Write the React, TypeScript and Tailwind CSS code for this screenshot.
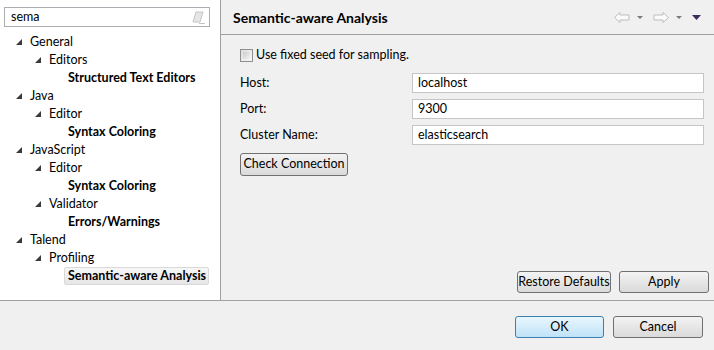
import React from 'react';

const font = { fontFamily: '"Segoe UI", Lato, "Noto Sans", sans-serif' };

type Node = { label: string; depth: number; leaf?: boolean; selected?: boolean };

const tree: Node[] = [
  { label: 'General', depth: 0 },
  { label: 'Editors', depth: 1 },
  { label: 'Structured Text Editors', depth: 2, leaf: true },
  { label: 'Java', depth: 0 },
  { label: 'Editor', depth: 1 },
  { label: 'Syntax Coloring', depth: 2, leaf: true },
  { label: 'JavaScript', depth: 0 },
  { label: 'Editor', depth: 1 },
  { label: 'Syntax Coloring', depth: 2, leaf: true },
  { label: 'Validator', depth: 1 },
  { label: 'Errors/Warnings', depth: 2, leaf: true },
  { label: 'Talend', depth: 0 },
  { label: 'Profiling', depth: 1 },
  { label: 'Semantic-aware Analysis', depth: 2, leaf: true, selected: true },
];

const Expanded = () => (
  <svg width="6" height="6" viewBox="0 0 6 6" className="shrink-0">
    <polygon points="6,0 6,6 0,6" fill="#3a3a3a" />
  </svg>
);

const Btn = ({ label, w, primary }: { label: string; w: string; primary?: boolean }) => (
  <button
    className={`${w} h-[22px] rounded-[3px] border text-[12.5px] text-black ${
      primary
        ? 'border-[#3c7fb1] bg-gradient-to-b from-[#eaf6fd] to-[#bfe2f8]'
        : 'border-[#707070] bg-gradient-to-b from-[#f3f3f3] to-[#dadada]'
    }`}
  >
    {label}
  </button>
);

const Field = ({ label, value }: { label: string; value: string }) => (
  <div className="flex items-center h-[20px]">
    <span className="w-[172px] text-[12.5px]">{label}</span>
    <div className="flex-1 h-[20px] bg-white border border-[#c5c5c5] flex items-center px-[5px] text-[12.5px]">
      {value}
    </div>
  </div>
);

export default function App() {
  return (
    <div className="w-[714px] h-[350px] bg-[#f0f0f0] text-black flex flex-col overflow-hidden" style={font}>
      <div className="flex h-[300px]">
        {/* left tree */}
        <div className="w-[221px] bg-white border-r border-[#a0a0a0] flex flex-col">
          <div className="mt-[7px] ml-[4px] w-[206px] h-[20px] border border-[#abadb3] flex items-center pl-[6px] pr-[4px] text-[12.5px]">
            <span className="flex-1">sema</span>
            <svg width="13" height="13" viewBox="0 0 13 13">
              <polygon points="4,1 11,1 8,11 1,11" fill="#e6e6e6" stroke="#c4c4c4" strokeWidth="1" />
              <line x1="7" y1="12.5" x2="13" y2="12.5" stroke="#c4c4c4" />
            </svg>
          </div>
          <div className="mt-[6px] flex flex-col">
            {tree.map((n, i) => (
              <div key={i} className="h-[18px] flex items-center text-[12.5px]">
                {n.leaf ? (
                  <div
                    style={{ marginLeft: 64 }}
                    className={`h-[18px] flex items-center px-[4px] font-bold ${
                      n.selected ? 'rounded-[2px] border border-[#d9d9d9] bg-gradient-to-b from-[#f7f7f7] to-[#e6e6e6] pl-[3px] pr-[2px]' : ''
                    }`}
                  >
                    {n.label}
                  </div>
                ) : (
                  <div className="flex items-center" style={{ marginLeft: 16 + n.depth * 19 }}>
                    <Expanded />
                    <span className="ml-[8px]">{n.label}</span>
                  </div>
                )}
              </div>
            ))}
          </div>
        </div>

        {/* right page */}
        <div className="flex-1 flex flex-col">
          <div className="h-[35px] border-b border-[#a0a0a0] flex items-center pl-[12px] pr-[13px]">
            <span className="flex-1 text-[14px] font-bold">Semantic-aware Analysis</span>
            <div className="flex items-center">
              <svg width="16" height="11" viewBox="0 0 16 11">
                <polygon points="0.5,5.5 6,0.5 6,3 15,3 15,8 6,8 6,10.5" fill="#fafafa" stroke="#bdbdbd" />
              </svg>
              <svg width="6" height="3" viewBox="0 0 6 3" className="ml-[7px]">
                <polygon points="0,0 6,0 3,3" fill="#7a7a7a" />
              </svg>
              <svg width="16" height="11" viewBox="0 0 16 11" className="ml-[10px]">
                <polygon points="15.5,5.5 10,0.5 10,3 1,3 1,8 10,8 10,10.5" fill="#fafafa" stroke="#bdbdbd" />
              </svg>
              <svg width="6" height="3" viewBox="0 0 6 3" className="ml-[7px]">
                <polygon points="0,0 6,0 3,3" fill="#7a7a7a" />
              </svg>
              <svg width="9" height="5" viewBox="0 0 9 5" className="ml-[10px]">
                <polygon points="0,0 9,0 4.5,5" fill="#3b2a5c" />
              </svg>
            </div>
          </div>

          <div className="flex-1 flex flex-col pl-[19px] pr-[10px]">
            <div className="mt-[14px] flex items-center h-[13px] text-[12.5px]">
              <div className="w-[13px] h-[13px] border border-[#8e8f8f] bg-gradient-to-br from-[#dcdcdc] to-[#f8f8f8] p-[2px]">
                <div className="w-full h-full bg-gradient-to-br from-[#cbcbcb] to-[#f4f4f4]" />
              </div>
              <span className="ml-[3px]">Use fixed seed for sampling.</span>
            </div>
            <div className="mt-[11px] flex flex-col gap-[6px]">
              <Field label="Host:" value="localhost" />
              <Field label="Port:" value="9300" />
              <Field label="Cluster Name:" value="elasticsearch" />
            </div>
            <div className="mt-[5px]">
              <button className="w-[108px] h-[23px] rounded-[3px] border border-[#707070] bg-gradient-to-b from-[#f3f3f3] to-[#dadada] text-[12.5px]">
                Check Connection
              </button>
            </div>
            <div className="flex-1" />
            <div className="flex justify-end gap-[8px] mb-[7px] -mr-[5px]">
              <Btn label="Restore Defaults" w="w-[94px]" />
              <Btn label="Apply" w="w-[90px]" />
            </div>
          </div>
        </div>
      </div>

      <div className="flex-1 border-t border-[#a0a0a0] flex justify-end items-start pt-[15px] pr-[11px] gap-[9px]">
        <Btn label="OK" w="w-[89px]" primary />
        <Btn label="Cancel" w="w-[90px]" />
      </div>
    </div>
  );
}
